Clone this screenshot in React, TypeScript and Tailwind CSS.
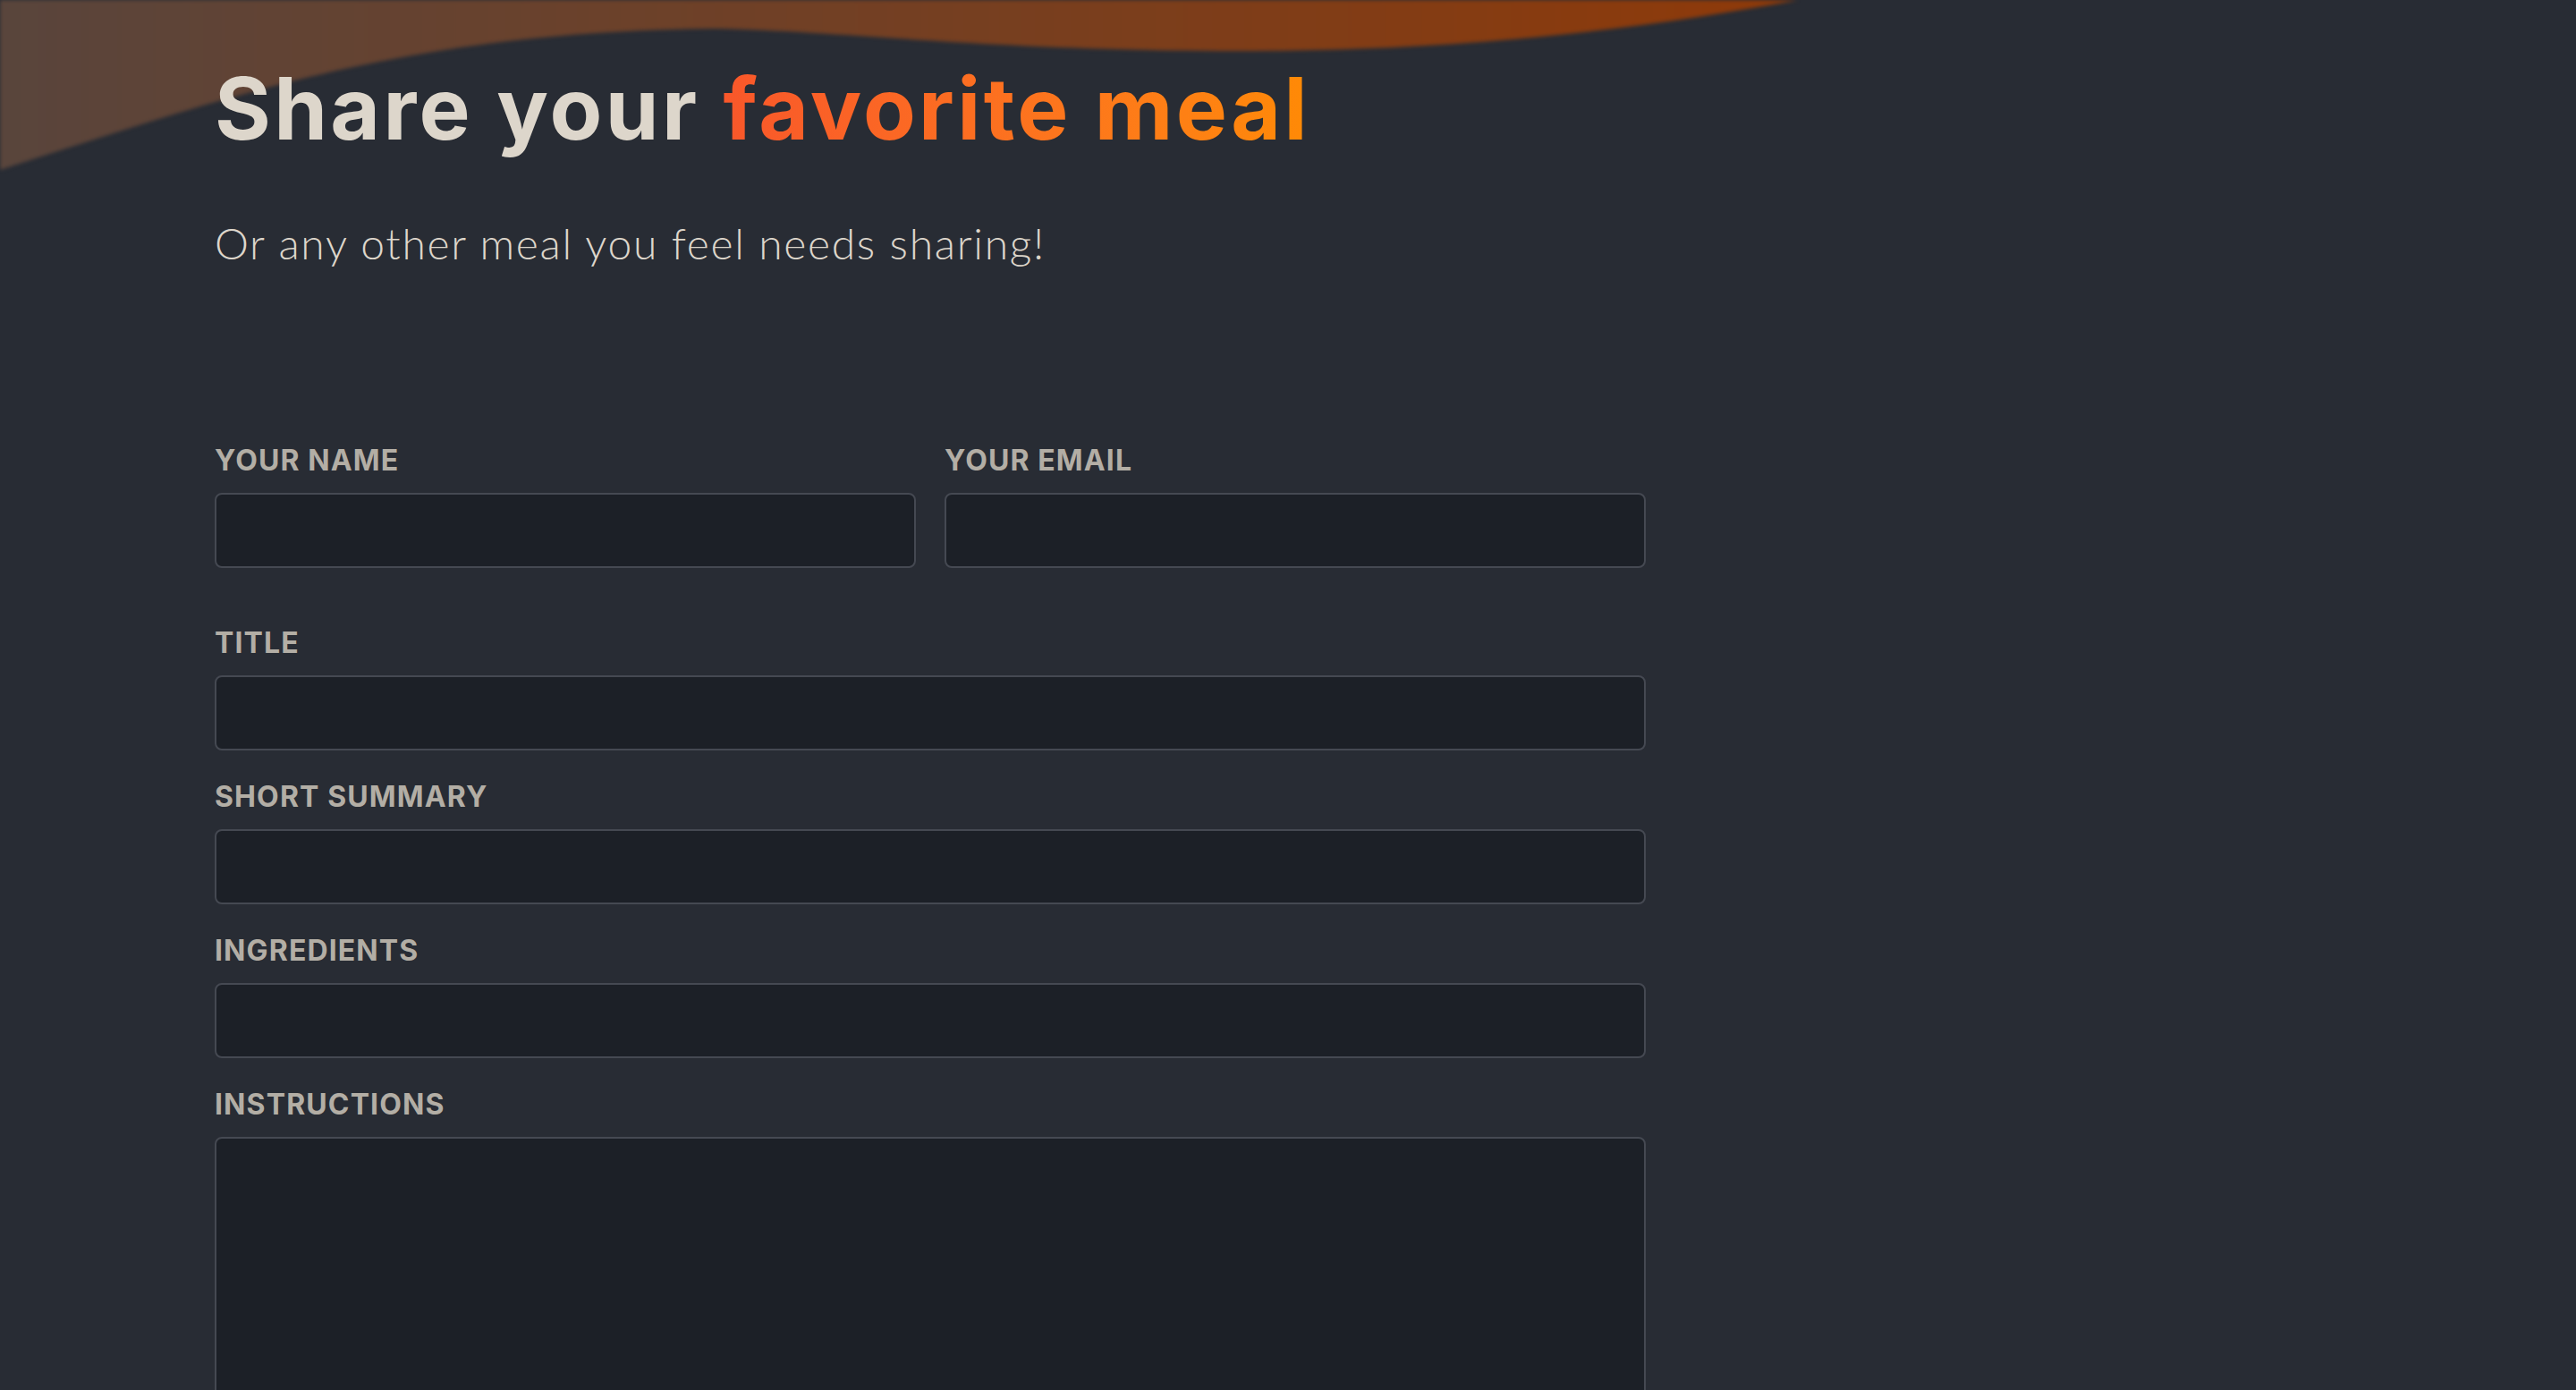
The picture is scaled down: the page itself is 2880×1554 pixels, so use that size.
import type { ReactNode } from "react";

const LABEL =
  "block mb-4 text-[32px] leading-[40px] font-bold uppercase text-[#b3aea5] tracking-[0.035em] font-['Inter','Liberation_Sans',sans-serif]";
const FIELD =
  "block w-full rounded-lg border-2 border-[#454952] bg-[#1c2027] px-8 py-4 text-[40px] leading-[48px] text-[#ddd6ce] outline-none font-['Inter','Liberation_Sans',sans-serif]";

function Field({ id, label, children }: { id: string; label: string; children: ReactNode }) {
  return (
    <p className="flex-1 m-0">
      <label htmlFor={id} className={LABEL}>
        {label}
      </label>
      {children}
    </p>
  );
}

function HeaderWave() {
  return (
    <div className="absolute top-0 left-0 w-full h-[200px] blur-[2px] pointer-events-none">
      <svg className="block w-full h-full" viewBox="0 0 2880 200" preserveAspectRatio="none">
        <defs>
          <linearGradient id="wave" x1="0%" y1="0%" x2="100%" y2="0%">
            <stop offset="0%" stopColor="#59453c" />
            <stop offset="100%" stopColor="#8f3a09" />
          </linearGradient>
        </defs>
        <path
          fill="url(#wave)"
          d="M0,190 C250,110 450,35 800,32 C950,35 1100,57 1400,57 C1650,56 1850,30 2010,0 L0,0 Z"
        />
      </svg>
    </div>
  );
}

export default function App() {
  return (
    <div className="relative min-h-screen overflow-hidden bg-[#282c34]">
      <HeaderWave />

      <header className="relative mx-auto w-[90%] max-w-[2400px] pt-[63px] text-[#ddd6cb]">
        <h1 className="m-0 text-[96px] leading-[116px] font-bold tracking-[0.035em] font-['Inter','Liberation_Sans',sans-serif]">
          Share your{" "}
          <span className="bg-gradient-to-r from-[#f9572a] to-[#ff8a05] bg-clip-text text-transparent">
            favorite meal
          </span>
        </h1>
        <p className="mt-16 text-[48px] leading-[58px] font-light tracking-[0.035em] font-['Lato','Noto_Sans',sans-serif]">
          Or any other meal you feel needs sharing!
        </p>
      </header>

      <main className="relative mx-auto w-[90%] max-w-[2400px] pt-[194px] pb-24 text-white">
        <form className="flex max-w-[1600px] flex-col gap-8">
          <div className="mb-8 flex gap-8">
            <Field id="name" label="Your name">
              <input id="name" type="text" className={`${FIELD} h-[84px]`} />
            </Field>
            <Field id="email" label="Your email">
              <input id="email" type="email" className={`${FIELD} h-[84px]`} />
            </Field>
          </div>
          <Field id="title" label="Title">
            <input id="title" type="text" className={`${FIELD} h-[84px]`} />
          </Field>
          <Field id="summary" label="Short Summary">
            <input id="summary" type="text" className={`${FIELD} h-[84px]`} />
          </Field>
          <Field id="ingredients" label="Ingredients">
            <input id="ingredients" type="text" className={`${FIELD} h-[84px]`} />
          </Field>
          <Field id="instructions" label="Instructions">
            <textarea id="instructions" rows={10} className={`${FIELD} h-[560px] resize-none`} />
          </Field>
        </form>
      </main>
    </div>
  );
}
